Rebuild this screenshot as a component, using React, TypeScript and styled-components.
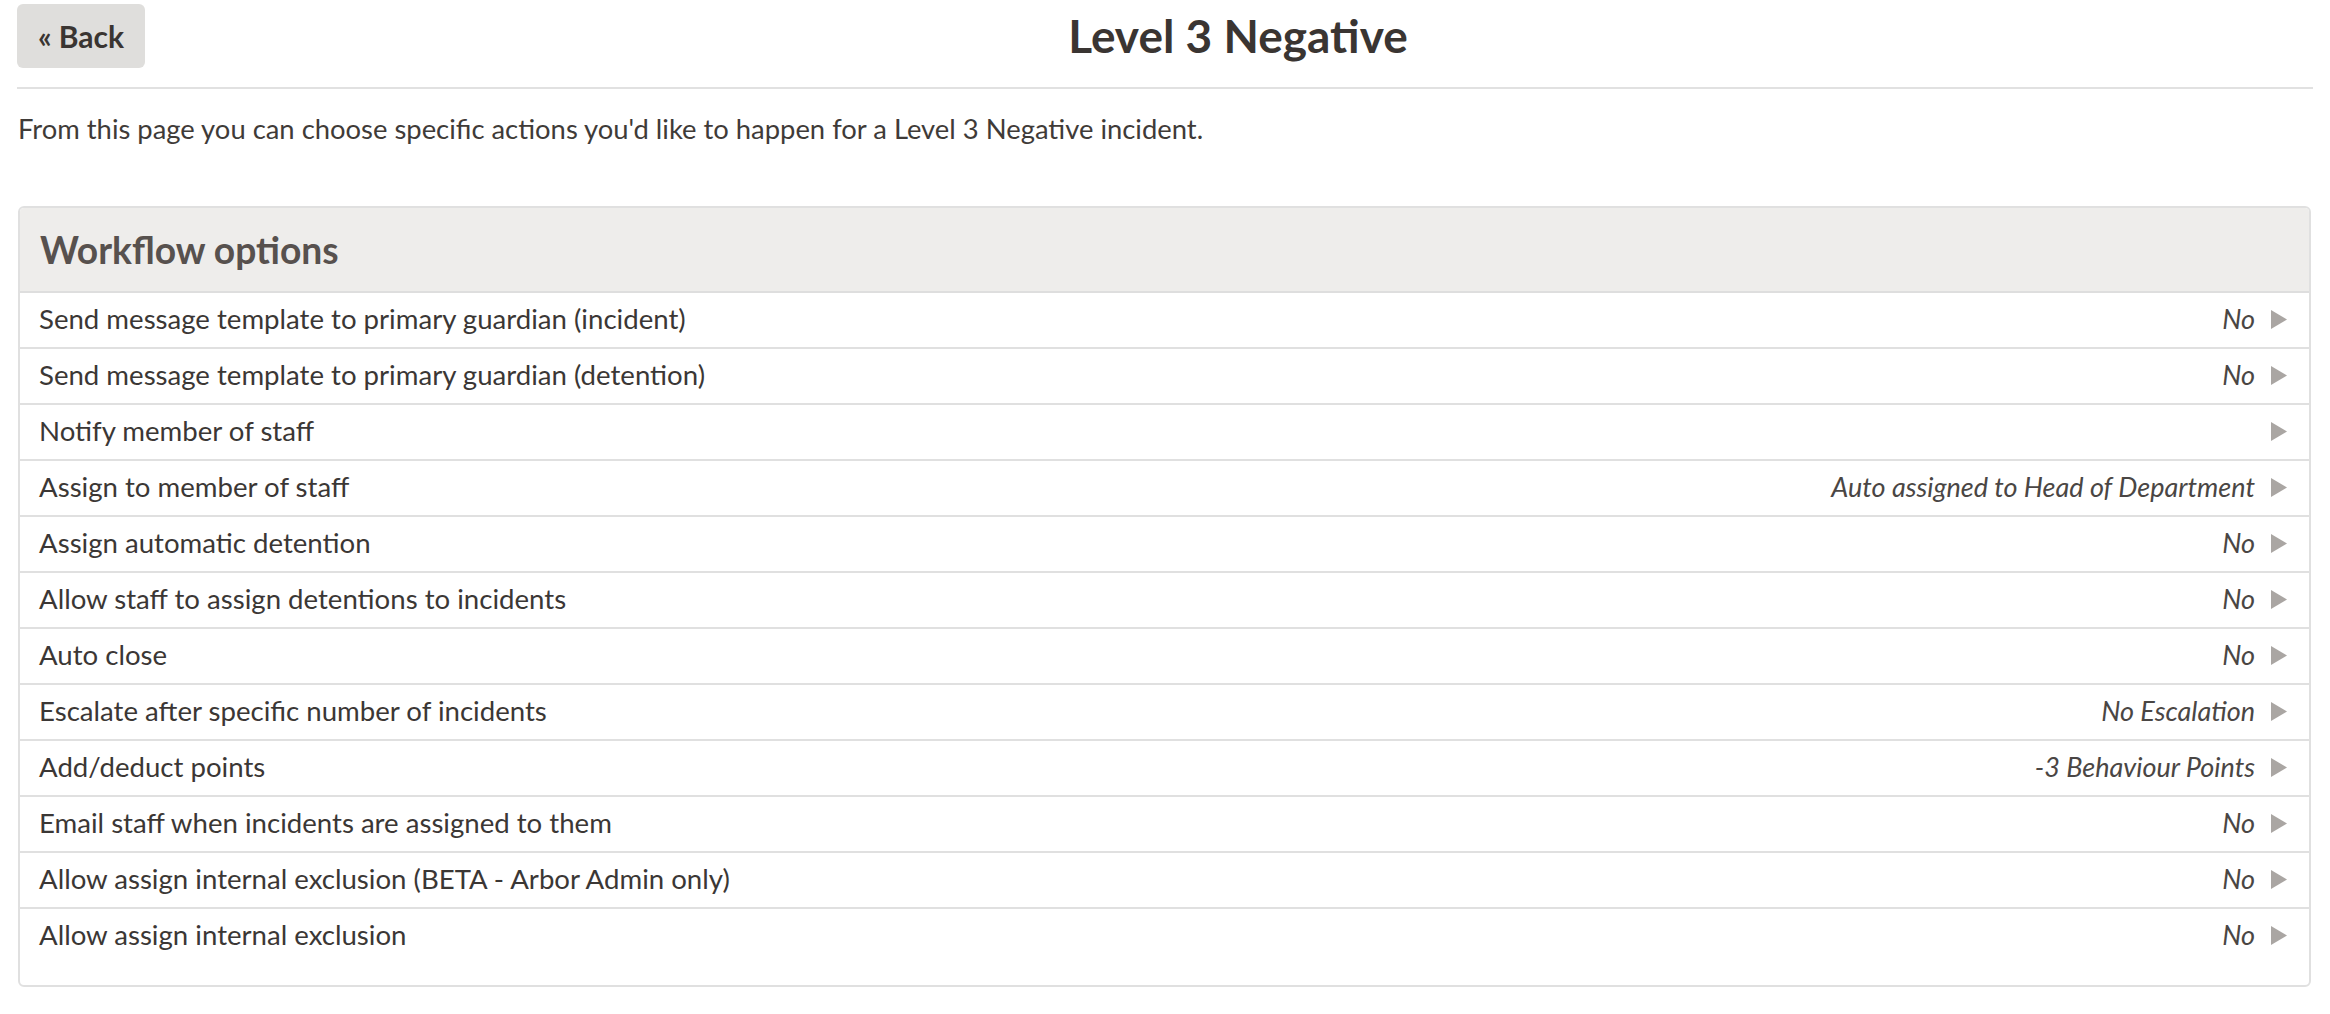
import React from "react";
import styled, { createGlobalStyle } from "styled-components";

const GlobalStyle = createGlobalStyle`
  html, body { margin: 0; padding: 0; background: #ffffff; }
  body {
    font-family: Lato, "Open Sans", "Noto Sans", sans-serif;
    color: #3b3735;
  }
`;

const Page = styled.div`
  padding: 4px 19px 0 18px;
`;

const TopBar = styled.header`
  display: flex;
  align-items: flex-start;
  gap: 18px;
  height: 83px;
  border-bottom: 2px solid #e1e1e1;
  margin-left: -1px;
  margin-right: -2px;
`;

const BackButton = styled.button`
  flex: none;
  width: 128px;
  height: 64px;
  border: none;
  border-radius: 6px;
  background: #dfdedc;
  color: #3a3532;
  font-family: Lato, "Open Sans", sans-serif;
  font-weight: 700;
  font-size: 30px;
  line-height: 64px;
  padding: 0;
  cursor: pointer;
`;

const Title = styled.h1`
  flex: 1;
  margin: 0;
  text-align: center;
  font-size: 46px;
  font-weight: 700;
  line-height: 64px;
  color: #3a3532;
`;

const Intro = styled.p`
  margin: 22px 0 59px;
  font-size: 27.4px;
  line-height: 36px;
  color: #3f3b38;
`;

const Panel = styled.section`
  border: 2px solid #e0e0e0;
  border-radius: 6px;
  overflow: hidden;
  padding-bottom: 22px;
`;

const PanelHeader = styled.h2`
  margin: 0;
  height: 83px;
  padding: 0 20px;
  background: #eeedeb;
  border-bottom: 2px solid #dedede;
  font-size: 37.2px;
  font-weight: 700;
  line-height: 84px;
  color: #57514e;
`;

const Row = styled.div<{ $last?: boolean }>`
  display: flex;
  align-items: center;
  height: 52px;
  padding: 0 22px 2px 19px;
  box-sizing: content-box;
  border-bottom: ${(p) => (p.$last ? "none" : "2px solid #e0e0e0")};
  cursor: pointer;
`;

const Label = styled.span`
  flex: 1;
  font-size: 27.6px;
  line-height: 36px;
  color: #3b3735;
`;

const Value = styled.span`
  font-size: 27px;
  font-style: italic;
  line-height: 36px;
  color: #4a4644;
  margin-right: 16px;
`;

const Arrow = styled.svg`
  flex: none;
  width: 16px;
  height: 19px;
`;

const options: { label: string; value?: string }[] = [
  { label: "Send message template to primary guardian (incident)", value: "No" },
  { label: "Send message template to primary guardian (detention)", value: "No" },
  { label: "Notify member of staff" },
  { label: "Assign to member of staff", value: "Auto assigned to Head of Department" },
  { label: "Assign automatic detention", value: "No" },
  { label: "Allow staff to assign detentions to incidents", value: "No" },
  { label: "Auto close", value: "No" },
  { label: "Escalate after specific number of incidents", value: "No Escalation" },
  { label: "Add/deduct points", value: "-3 Behaviour Points" },
  { label: "Email staff when incidents are assigned to them", value: "No" },
  { label: "Allow assign internal exclusion (BETA - Arbor Admin only)", value: "No" },
  { label: "Allow assign internal exclusion", value: "No" },
];

export default function App() {
  return (
    <>
      <GlobalStyle />
      <Page>
        <TopBar>
          <BackButton>« Back</BackButton>
          <Title>Level 3 Negative</Title>
        </TopBar>
        <Intro>
          From this page you can choose specific actions you'd like to happen for a Level 3 Negative incident.
        </Intro>
        <Panel>
          <PanelHeader>Workflow options</PanelHeader>
          {options.map((o, i) => (
            <Row key={i} $last={i === options.length - 1}>
              <Label>{o.label}</Label>
              {o.value && <Value>{o.value}</Value>}
              <Arrow viewBox="0 0 16 19">
                <polygon points="0,0 16,9.5 0,19" fill="#aaa6a3" />
              </Arrow>
            </Row>
          ))}
        </Panel>
      </Page>
    </>
  );
}
